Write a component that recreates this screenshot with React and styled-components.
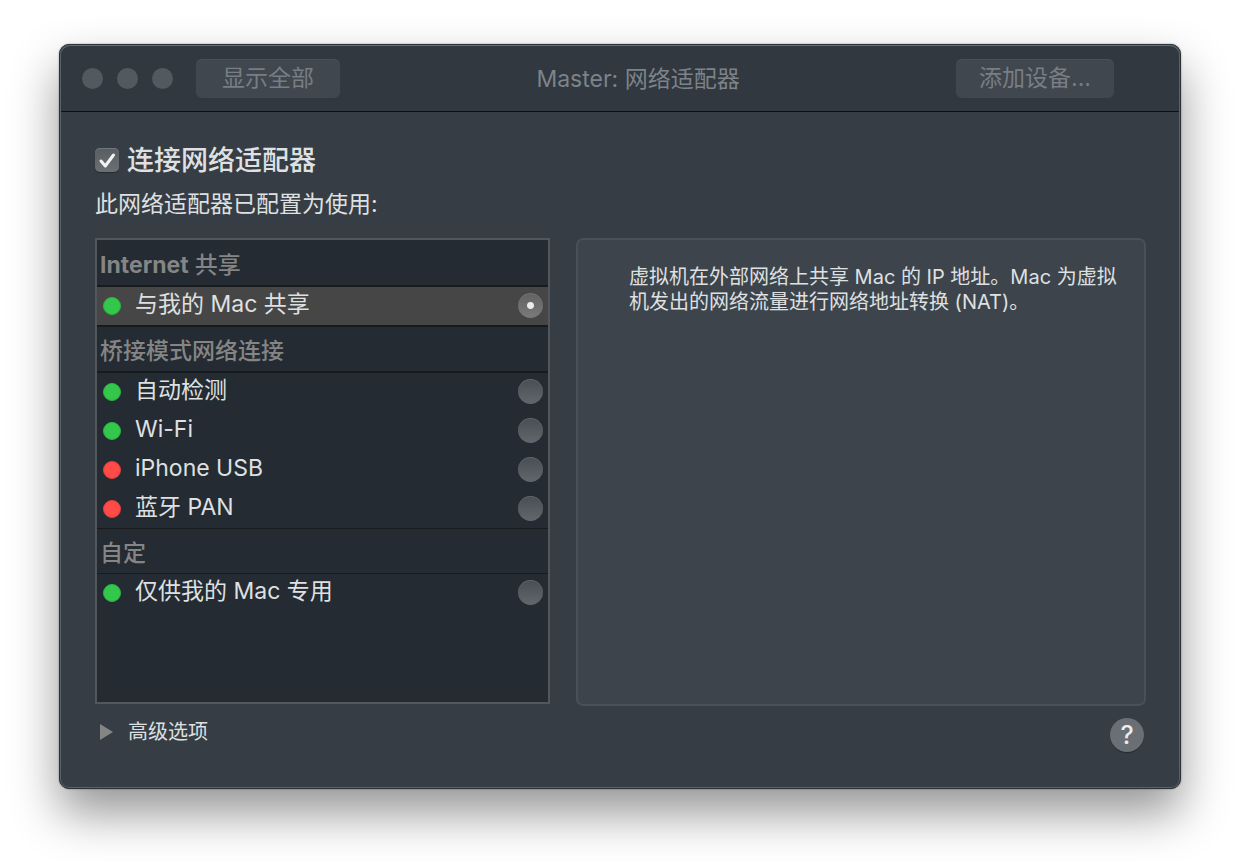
import React, { useState } from "react";
import styled, { createGlobalStyle } from "styled-components";

const GlobalStyle = createGlobalStyle`
  *, *::before, *::after { box-sizing: border-box; }
  body {
    margin: 0;
    background: #fff;
    color: #dfe0e1;
    font-family: Inter, "Noto Sans CJK SC", sans-serif;
    font-size: 23px;
    line-height: 32px;
  }
  button, input { font: inherit; color: inherit; margin: 0; }
  h1, h2, h3, p { margin: 0; font: inherit; }
`;

const Desktop = styled.div`
  min-height: 100vh;
  padding: 44px 59px 72px;
`;

const Window = styled.main`
  display: flex;
  flex-direction: column;
  border: 1px solid #2b3235;
  border-radius: 10px;
  background: #363d44;
  box-shadow:
    inset 0 0 0 1px #59636a,
    0 0 2px rgba(0, 0, 0, 0.4),
    0 24px 48px rgba(0, 0, 0, 0.42);
`;

const TitleBar = styled.header`
  display: flex;
  align-items: center;
  height: 67px;
  margin: 0 1px;
  padding: 1px 65px 0 21px;
  border-bottom: 1px solid #0b1012;
  border-radius: 9px 9px 0 0;
  background: #31383f;
  box-shadow: inset 0 1px 0 #66706f;
  color: #7c838a;
`;

const TrafficLights = styled.div`
  display: flex;
  gap: 14px;
  margin-right: 23px;
`;

const Light = styled.button`
  width: 21px;
  height: 21px;
  padding: 0;
  border: 0;
  border-radius: 50%;
  background: #52595f;
`;

const BarButton = styled.button`
  height: 39px;
  padding: 0 ${(p) => p.$pad}px;
  border: 0;
  border-radius: 6px;
  background: #40474e;
  box-shadow: inset 0 1px 0 #495056;
  line-height: 39px;
  color: #777e85;
`;

const Title = styled.h1`
  flex: 1;
  padding-right: 20px;
  text-align: center;
`;

const Content = styled.div`
  padding: 32px 34px 36px 35px;
`;

const ConnectLabel = styled.label`
  display: flex;
  align-items: center;
  gap: 8px;
  width: fit-content;
  font-size: 27px;
  font-weight: 500;
  line-height: 34px;
`;

const CheckWrap = styled.span`
  display: grid;
  width: 24px;
  height: 24px;
  margin-bottom: 2px;
  > * { grid-area: 1 / 1; }
  svg { pointer-events: none; z-index: 1; }
`;

const CheckBox = styled.input`
  appearance: none;
  width: 24px;
  height: 24px;
  border-radius: 5px;
  background: linear-gradient(#575d62, #6b7074);
  box-shadow: inset 0 1px 0 #71767a, 0 1px 1px rgba(0, 0, 0, 0.3);
  &:not(:checked) + svg { visibility: hidden; }
`;

const Subtitle = styled.p`
  margin-top: 10px;
`;

const Columns = styled.div`
  display: grid;
  grid-template-columns: 455fr 570fr;
  gap: 26px;
  margin-top: 18px;
`;

const AdapterList = styled.div`
  height: 466px;
  border: 2px solid #51575a;
  background: #242b32;
`;

const SectionHeader = styled.h2`
  height: ${(p) => p.$height}px;
  padding: ${(p) => p.$top}px 3px 0;
  border: solid #171b1e;
  border-width: ${(p) => p.$lines};
  color: #858585;
  font-weight: 500;
  strong { font-weight: 700; }
`;

const Rows = styled.div`
  display: grid;
  gap: 1px;
`;

const Row = styled.label`
  display: grid;
  grid-template-columns: 18px 1fr 25px;
  align-items: center;
  height: 38px;
  padding: 0 5px 0 6px;
  background: ${(p) => (p.$selected ? "#464646" : "transparent")};
`;

const StatusDot = styled.span`
  width: 18px;
  height: 18px;
  border: 1px solid ${(p) => (p.$up ? "#2bb540" : "#e0403d")};
  border-radius: 50%;
  background: ${(p) => (p.$up ? "#33c84b" : "#ff4b48")};
`;

const RowName = styled.span`
  padding: 0 14px 4px;
`;

const Radio = styled.input`
  appearance: none;
  width: 25px;
  height: 25px;
  margin-bottom: 2px;
  border-radius: 50%;
  background: linear-gradient(#474e54, #62676b);
  box-shadow: inset 0 1px 0 #5c6267;
  &:checked {
    background:
      radial-gradient(circle, #ececec 3px, transparent 4px),
      linear-gradient(#626262, #7a7a7a);
    box-shadow: inset 0 1px 0 #747474;
  }
`;

const Description = styled.section`
  margin-bottom: -2px;
  padding: 25px 20px 0 51px;
  border: 2px solid #495057;
  border-radius: 7px;
  background: #3d444b;
  font-size: 20px;
  line-height: 25px;
`;

const Footer = styled.footer`
  display: flex;
  justify-content: space-between;
  align-items: flex-start;
  padding: 14px 2px 0 4px;
`;

const Disclosure = styled.button`
  display: flex;
  align-items: center;
  gap: 15px;
  padding: 0;
  border: 0;
  background: none;
  font-size: 20px;
  line-height: 28px;
`;

const HelpButton = styled.button`
  width: 34px;
  height: 34px;
  padding: 0;
  border: 0;
  border-radius: 50%;
  background: #6a6f75;
  box-shadow: 0 1px 1px rgba(0, 0, 0, 0.3);
  color: #ececec;
  font-size: 25px;
  font-weight: 500;
  line-height: 34px;
`;

const sections = [
  {
    id: "internet",
    title: <><strong>Internet</strong> 共享</>,
    header: { $height: 47, $top: 9, $lines: "0 0 2px" },
    items: [{ id: "shared", name: "与我的 Mac 共享", up: true }],
  },
  {
    id: "bridged",
    title: "桥接模式网络连接",
    header: { $height: 48, $top: 8, $lines: "2px 0" },
    items: [
      { id: "auto", name: "自动检测", up: true },
      { id: "wifi", name: "Wi-Fi", up: true },
      { id: "usb", name: "iPhone USB", up: false },
      { id: "pan", name: "蓝牙 PAN", up: false },
    ],
  },
  {
    id: "custom",
    title: "自定",
    header: { $height: 46, $top: 8, $lines: "1px 0" },
    items: [{ id: "private", name: "仅供我的 Mac 专用", up: true }],
  },
];

export default function App() {
  const [selected, setSelected] = useState("shared");
  return (
    <Desktop>
      <GlobalStyle />
      <Window>
        <TitleBar>
          <TrafficLights>
            <Light aria-label="关闭" />
            <Light aria-label="最小化" />
            <Light aria-label="缩放" />
          </TrafficLights>
          <BarButton $pad={26}>显示全部</BarButton>
          <Title>Master: 网络适配器</Title>
          <BarButton $pad={23}>添加设备...</BarButton>
        </TitleBar>
        <Content>
          <ConnectLabel>
            <CheckWrap>
              <CheckBox type="checkbox" defaultChecked />
              <svg width="24" height="24" viewBox="0 0 24 24" fill="none" stroke="#f2f2f2" strokeWidth="3" strokeLinecap="round" strokeLinejoin="round">
                <path d="M6 13 10.3 18 18.5 7" />
              </svg>
            </CheckWrap>
            连接网络适配器
          </ConnectLabel>
          <Subtitle>此网络适配器已配置为使用:</Subtitle>
          <Columns>
            <AdapterList role="radiogroup" aria-label="网络适配器">
              {sections.map((s) => (
                <React.Fragment key={s.id}>
                  <SectionHeader {...s.header}>{s.title}</SectionHeader>
                  <Rows>
                    {s.items.map((item) => (
                      <Row key={item.id} $selected={selected === item.id}>
                        <StatusDot $up={item.up} />
                        <RowName>{item.name}</RowName>
                        <Radio
                          type="radio"
                          name="adapter"
                          checked={selected === item.id}
                          onChange={() => setSelected(item.id)}
                        />
                      </Row>
                    ))}
                  </Rows>
                </React.Fragment>
              ))}
            </AdapterList>
            <Description>
              <p>虚拟机在外部网络上共享 Mac 的 IP 地址。Mac 为虚拟机发出的网络流量进行网络地址转换 (NAT)。</p>
            </Description>
          </Columns>
          <Footer>
            <Disclosure aria-expanded="false">
              <svg width="14" height="16" viewBox="0 0 14 16" fill="#858585">
                <path d="M1 0v16l13-8z" />
              </svg>
              高级选项
            </Disclosure>
            <HelpButton aria-label="帮助">?</HelpButton>
          </Footer>
        </Content>
      </Window>
    </Desktop>
  );
}
